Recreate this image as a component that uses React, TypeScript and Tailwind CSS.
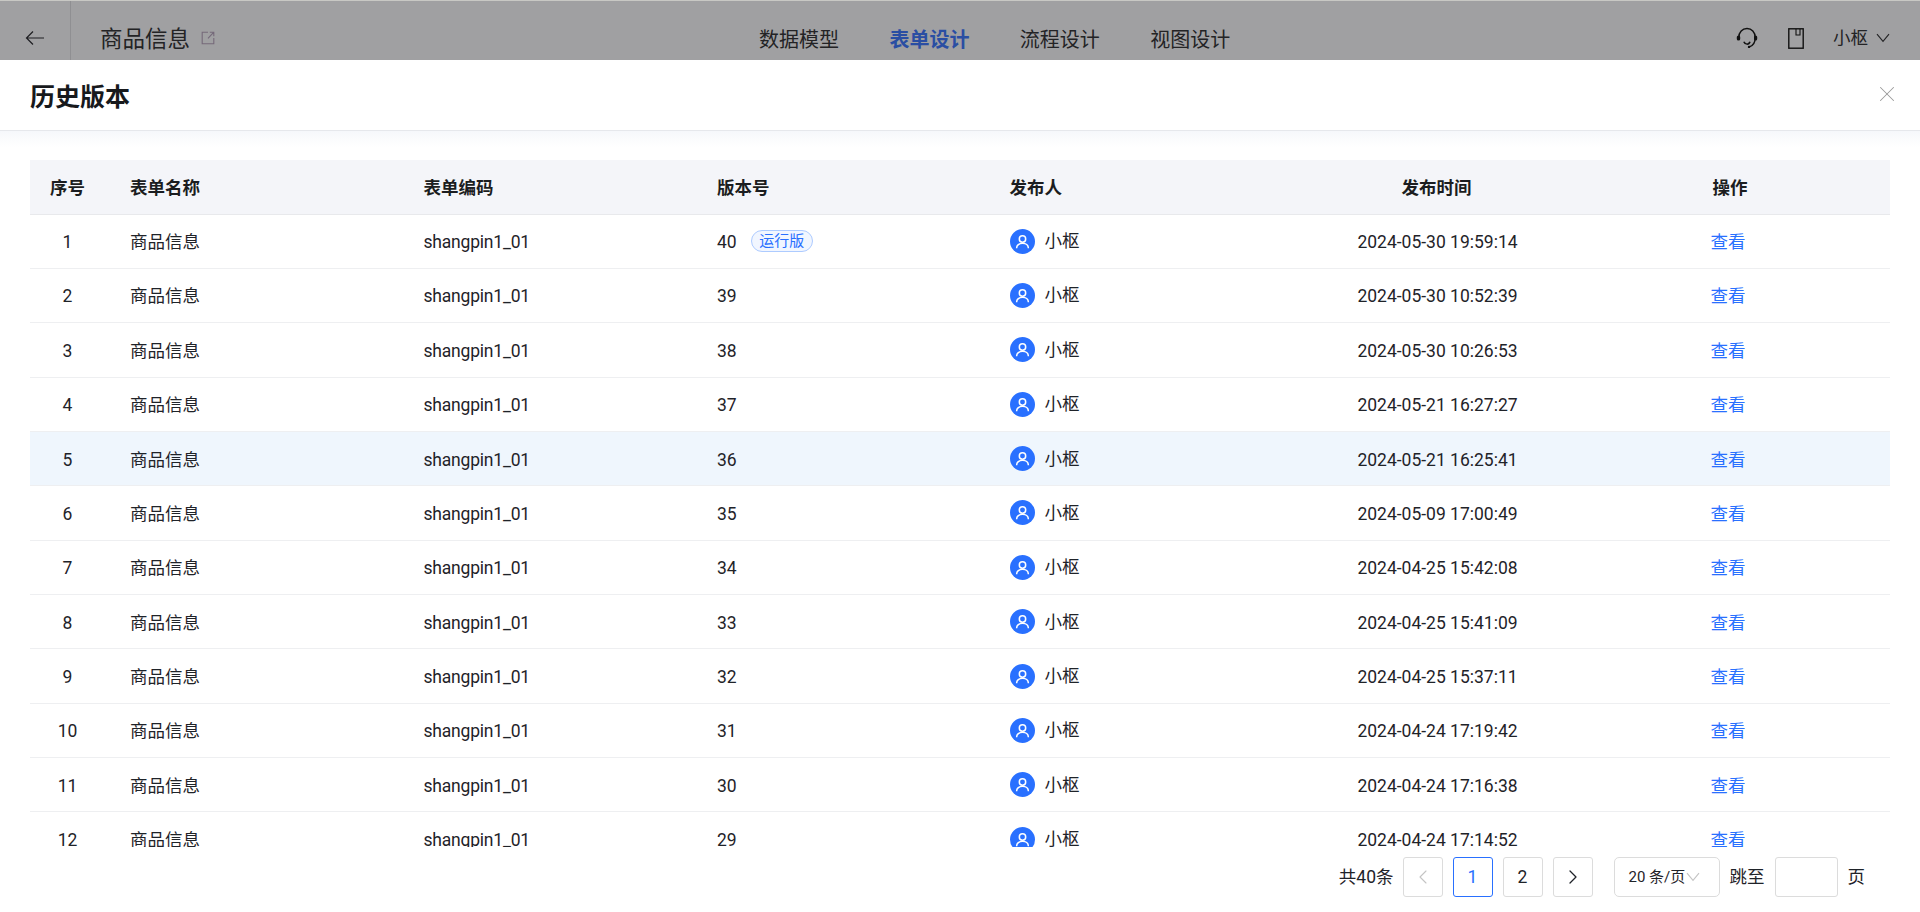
import { ChevronLeft, ChevronRight, X } from "lucide-react";

const font = "font-['Roboto','Noto_Sans_CJK_SC',sans-serif]";
const cols = "grid grid-cols-[75px_293.5px_293.5px_293.5px_305px_294px_1fr] items-center";

const rows = [
  ["1", "40", "2024-05-30 19:59:14"],
  ["2", "39", "2024-05-30 10:52:39"],
  ["3", "38", "2024-05-30 10:26:53"],
  ["4", "37", "2024-05-21 16:27:27"],
  ["5", "36", "2024-05-21 16:25:41"],
  ["6", "35", "2024-05-09 17:00:49"],
  ["7", "34", "2024-04-25 15:42:08"],
  ["8", "33", "2024-04-25 15:41:09"],
  ["9", "32", "2024-04-25 15:37:11"],
  ["10", "31", "2024-04-24 17:19:42"],
  ["11", "30", "2024-04-24 17:16:38"],
  ["12", "29", "2024-04-24 17:14:52"],
];

function Avatar() {
  return (
    <span className="flex h-[25px] w-[25px] -translate-y-px items-center justify-center rounded-full bg-[#2970ff]">
      <svg width="17" height="17" viewBox="0 0 17 17" fill="none" stroke="#fff" strokeWidth="1.5">
        <circle cx="8.5" cy="6" r="3.2" />
        <path d="M2.6 15.2c0-3 2.6-5 5.9-5s5.9 2 5.9 5" />
      </svg>
    </span>
  );
}

function Chevron({ className }: { className?: string }) {
  return (
    <svg className={className} width="14" height="10" viewBox="0 0 14 10" fill="none" stroke="currentColor" strokeWidth="1.1">
      <path d="M1 1.2 7 8.4 13 1.2" />
    </svg>
  );
}

export default function App() {
  return (
    <div className={`${font} flex h-[912px] w-[1920px] flex-col overflow-hidden bg-white text-[17.5px] text-[#1f2329]`}>
      <header className="flex h-[60px] shrink-0 items-center border-t border-[#c8c8c4] bg-[#a0a0a2] text-[#232325]">
        <div className="flex h-full w-[71px] shrink-0 items-center justify-center border-r border-[#8f8f92] pt-[15px]">
          <svg width="20" height="16" viewBox="0 0 20 16" fill="none" stroke="#1e1e22" strokeWidth="1.2">
            <path d="M19 8H1.5M8 1.5 1.5 8 8 14.5" />
          </svg>
        </div>
        <div className="ml-[29px] mt-[15px] flex w-[659px] shrink-0 items-center gap-[11px]">
          <span className="mt-[4px] text-[22.5px]">商品信息</span>
          <svg width="14" height="14" viewBox="0 0 14 14" fill="none" stroke="#75697a" strokeWidth="1.1">
            <path d="M7 1.2H1.2v11.6h11.6V7M7 7.4 12.6 1.4M8.8 1.2h4v4" />
          </svg>
        </div>
        <nav className="mt-[18px] flex gap-[50.4px] text-[20px]">
          <span>数据模型</span>
          <span className="font-bold text-[#2a4ea3]">表单设计</span>
          <span>流程设计</span>
          <span>视图设计</span>
        </nav>
        <div className="ml-auto mt-[15px] flex items-center pr-[30px]">
          <svg width="22" height="22" viewBox="0 0 22 22" fill="none" stroke="#111" strokeWidth="1.5">
            <path d="M2.8 10.5C2.8 5 6.4 1.6 11 1.6s8.2 3.4 8.2 8.9c0 4.6-1.9 8.4-6.2 9.4" />
            <path d="M7.8 14.8c1.2 3 5.2 3.2 6.2 0" />
            <rect x="0.8" y="8.4" width="3.4" height="5.2" rx="1.7" fill="#111" stroke="none" />
            <rect x="18" y="8.4" width="3.2" height="5.2" rx="1.6" fill="#111" stroke="none" />
            <circle cx="13" cy="19.9" r="1.2" fill="#111" stroke="none" />
          </svg>
          <svg className="ml-[30px]" width="16" height="21" viewBox="0 0 16 21" fill="none" stroke="#111" strokeWidth="1.4">
            <rect x="0.8" y="0.8" width="14.4" height="19.4" />
            <path d="M8 1v6h4V1" strokeWidth="1.1" />
          </svg>
          <span className="ml-[29px]">小枢</span>
          <Chevron className="ml-[8px]" />
        </div>
      </header>

      <div className="flex h-[71px] shrink-0 items-center justify-between border-b border-[#e6e8ec] pl-[30px] pr-[20px]">
        <h1 className="mt-[4px] text-[25px] font-bold leading-none text-[#17191c]">历史版本</h1>
        <X size={26} strokeWidth={0.95} className="mb-[2px] text-[#9a9a9a]" />
      </div>

      <main className="flex min-h-0 flex-1 flex-col bg-gradient-to-b from-[#f6f8fb] to-white to-[16px] px-[30px] pt-[29px]">
        <div className="h-[687px] overflow-hidden">
          <div className={`${cols} h-[54.6px] border-b border-[#e8e9ec] bg-[#f4f5f9] pt-[2px] font-semibold text-[#1b1d20]`}>
            <span className="text-center">序号</span>
            <span className="pl-[25px]">表单名称</span>
            <span className="pl-[25px]">表单编码</span>
            <span className="pl-[25px]">版本号</span>
            <span className="pl-[24px]">发布人</span>
            <span className="pr-[2px] text-center">发布时间</span>
            <span className="pl-[128px]">操作</span>
          </div>
          {rows.map(([n, v, t]) => (
            <div key={n} className={`${cols} h-[54.35px] border-b border-[#eeeff1] pt-[2px] ${n === "5" ? "bg-[#eff6fd]" : "bg-white"}`}>
              <span className="text-center">{n}</span>
              <span className="pl-[25px]">商品信息</span>
              <span className="pl-[25px] tracking-[-0.2px]">shangpin1_01</span>
              <span className="flex items-center pl-[25px]">
                <span>{v}</span>
                {n === "1" && (
                  <span className="ml-[14px] flex h-[22px] w-[62px] -translate-y-px items-center justify-center rounded-full border border-[#adcbff] bg-[#f1f6ff] text-[15px] text-[#2970ff]">
                    运行版
                  </span>
                )}
              </span>
              <span className="flex items-center gap-[10px] pl-[24px]">
                <Avatar />
                <span className="-translate-y-px">小枢</span>
              </span>
              <span className="text-center">{t}</span>
              <span className="pl-[126px] text-[#2970ff]">查看</span>
            </div>
          ))}
        </div>
        <div className="mt-[10px] flex h-[40px] items-center justify-end pr-[25px]">
          <span className="mr-[9px]">共40条</span>
          <span className="flex h-[40px] w-[40px] items-center justify-center rounded-[3px] border border-[#dcdcdc] text-[#c4c4c4]">
            <ChevronLeft size={24} strokeWidth={1.1} />
          </span>
          <span className="ml-[10px] flex h-[40px] w-[40px] items-center justify-center rounded-[3px] border border-[#2970ff] text-[#2970ff]">1</span>
          <span className="ml-[10px] flex h-[40px] w-[40px] items-center justify-center rounded-[3px] border border-[#dcdcdc]">2</span>
          <span className="ml-[10px] flex h-[40px] w-[40px] items-center justify-center rounded-[3px] border border-[#dcdcdc]">
            <ChevronRight size={24} strokeWidth={1.3} />
          </span>
          <span className="ml-[21px] flex h-[40px] w-[106px] items-center rounded-[5px] border border-[#dcdcdc] pl-[14px] text-[15px]">
            20 条/页
            <Chevron className="ml-px text-[#c4c4c4]" />
          </span>
          <span className="ml-[10px]">跳至</span>
          <span className="ml-[10px] h-[40px] w-[63px] rounded-[3px] border border-[#dcdcdc]" />
          <span className="ml-[10px]">页</span>
        </div>
      </main>
    </div>
  );
}
